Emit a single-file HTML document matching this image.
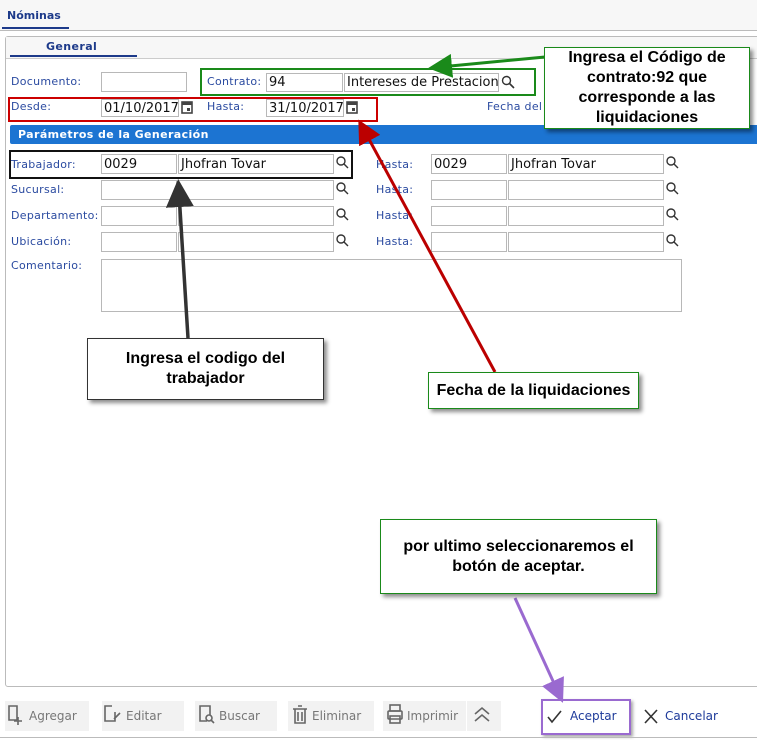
<!DOCTYPE html>
<html><head><meta charset="utf-8"><style>
body{margin:0;width:757px;height:740px;background:#fff;position:relative;overflow:hidden;font-family:"DejaVu Sans","Liberation Sans",sans-serif;}
.a{position:absolute}
.lbl{position:absolute;font-size:11px;color:#2a4aa0;letter-spacing:.3px}
.in{position:absolute;height:17px;border:1px solid #b8b8b8;background:#fff;box-sizing:border-box;font-size:12px;color:#111;padding:0 2px;white-space:nowrap;overflow:hidden;display:flex;align-items:center}
.call{position:absolute;background:#fff;font-family:"Liberation Sans",Arial,sans-serif;font-weight:bold;font-size:16px;text-align:center;box-shadow:3px 3px 4px rgba(0,0,0,.45);box-sizing:border-box;display:flex;align-items:center;justify-content:center;line-height:20px}
.btn{position:absolute;top:701px;height:30px;background:#f2f2f2;font-size:12px;color:#777;line-height:30px;box-sizing:border-box;padding-left:24px}
</style></head><body>
<div class="a" style="left:0;top:0;width:757px;height:30px;background:#f7f7f7"></div>
<div class="a" style="left:7px;top:9px;font-size:11px;font-weight:bold;color:#1d3a8a">Nóminas</div>
<div class="a" style="left:2px;top:27px;width:67px;height:2px;background:#1d3a8a"></div>
<div class="a" style="left:0;top:30px;width:757px;height:1px;background:#bbb"></div>
<div class="a" style="left:5px;top:36px;width:760px;height:651px;border:1px solid #bbb;box-sizing:border-box;border-radius:3px"></div>
<div class="a" style="left:6px;top:37px;width:751px;height:21px;background:#f7f7f7"></div>
<div class="a" style="left:46px;top:40px;font-size:11px;font-weight:bold;color:#1d3a8a;letter-spacing:.4px">General</div>
<div class="a" style="left:10px;top:55px;width:127px;height:2px;background:#1d3a8a"></div>
<div class="a" style="left:6px;top:58px;width:751px;height:1px;background:#ccc"></div>

<div class="lbl" style="left:11px;top:75px">Documento:</div>
<div class="in" style="left:101px;top:72px;width:86px;height:20px"></div>
<div class="a" style="left:200px;top:68px;width:336px;height:28px;border:2px solid #1a8a1a;box-sizing:border-box"></div>
<div class="lbl" style="left:207px;top:75px">Contrato:</div>
<div class="in" style="left:266px;top:73px;width:77px;height:19px;font-size:13px">94</div>
<div class="in" style="left:344px;top:73px;width:155px;height:19px;font-size:13px">Intereses de Prestacion</div>
<svg class="a" style="left:501px;top:75px" width="14" height="14"><circle cx="5.5" cy="5.5" r="4" fill="none" stroke="#333" stroke-width="1.4"/><line x1="8.5" y1="8.5" x2="13" y2="13" stroke="#333" stroke-width="1.6"/></svg>

<div class="a" style="left:8px;top:97px;width:370px;height:25px;border:2px solid #c00;box-sizing:border-box"></div>
<div class="lbl" style="left:11px;top:100px">Desde:</div>
<div class="in" style="left:101px;top:99px;width:78px;height:18px;font-size:13px">01/10/2017</div>
<div class="lbl" style="left:207px;top:100px">Hasta:</div>
<div class="in" style="left:266px;top:99px;width:78px;height:18px;font-size:13px">31/10/2017</div>
<svg class="a" style="left:181px;top:100px" width="12" height="14"><rect x="1" y="2" width="10" height="11" fill="none" stroke="#444" stroke-width="1.6"/><rect x="1" y="2" width="10" height="3" fill="#444"/><rect x="6" y="8" width="3" height="3" fill="#444"/></svg>
<svg class="a" style="left:346px;top:100px" width="12" height="14"><rect x="1" y="2" width="10" height="11" fill="none" stroke="#444" stroke-width="1.6"/><rect x="1" y="2" width="10" height="3" fill="#444"/><rect x="6" y="8" width="3" height="3" fill="#444"/></svg>
<div class="lbl" style="left:487px;top:100px">Fecha del</div>

<div class="a" style="left:10px;top:125px;width:747px;height:19px;background:#1c74d2;border-radius:2px 0 0 2px"></div>
<div class="a" style="left:18px;top:128px;font-size:11px;font-weight:bold;color:#fff;letter-spacing:.4px">Parámetros de la Generación</div>

<div class="a" style="left:9px;top:150px;width:344px;height:29px;border:2px solid #111;box-sizing:border-box"></div>
<div class="lbl" style="left:11px;top:158px">Trabajador:</div>
<div class="in" style="left:101px;top:154px;width:76px;height:20px;font-size:13px">0029</div>
<div class="in" style="left:178px;top:154px;width:156px;height:20px;font-size:13px">Jhofran Tovar</div>
<div class="lbl" style="left:376px;top:158px">Hasta:</div>
<div class="in" style="left:431px;top:154px;width:76px;height:20px;font-size:13px">0029</div>
<div class="in" style="left:508px;top:154px;width:156px;height:20px;font-size:13px">Jhofran Tovar</div>

<div class="lbl" style="left:11px;top:183px">Sucursal:</div>
<div class="lbl" style="left:11px;top:209px">Departamento:</div>
<div class="lbl" style="left:11px;top:235px">Ubicación:</div>
<div class="lbl" style="left:376px;top:183px">Hasta:</div>
<div class="lbl" style="left:376px;top:209px">Hasta:</div>
<div class="lbl" style="left:376px;top:235px">Hasta:</div>
<div class="in" style="left:101px;top:180px;width:76px;height:20px"></div><div class="in" style="left:178px;top:180px;width:156px;height:20px"></div>
<div class="in" style="left:101px;top:206px;width:76px;height:20px"></div><div class="in" style="left:178px;top:206px;width:156px;height:20px"></div>
<div class="in" style="left:101px;top:232px;width:76px;height:20px"></div><div class="in" style="left:178px;top:232px;width:156px;height:20px"></div>
<div class="in" style="left:431px;top:180px;width:76px;height:20px"></div><div class="in" style="left:508px;top:180px;width:156px;height:20px"></div>
<div class="in" style="left:431px;top:206px;width:76px;height:20px"></div><div class="in" style="left:508px;top:206px;width:156px;height:20px"></div>
<div class="in" style="left:431px;top:232px;width:76px;height:20px"></div><div class="in" style="left:508px;top:232px;width:156px;height:20px"></div>
<svg class="a" style="left:0;top:0" width="757" height="740">
<g fill="none" stroke="#333" stroke-width="1.4">
<circle cx="341" cy="161" r="4"/><line x1="344" y1="164" x2="348" y2="168"/>
<circle cx="671" cy="161" r="4"/><line x1="674" y1="164" x2="678" y2="168"/>
<circle cx="341" cy="187" r="4"/><line x1="344" y1="190" x2="348" y2="194"/>
<circle cx="671" cy="187" r="4"/><line x1="674" y1="190" x2="678" y2="194"/>
<circle cx="341" cy="213" r="4"/><line x1="344" y1="216" x2="348" y2="220"/>
<circle cx="671" cy="213" r="4"/><line x1="674" y1="216" x2="678" y2="220"/>
<circle cx="341" cy="239" r="4"/><line x1="344" y1="242" x2="348" y2="246"/>
<circle cx="671" cy="239" r="4"/><line x1="674" y1="242" x2="678" y2="246"/>
</g></svg>
<div class="lbl" style="left:11px;top:259px">Comentario:</div>
<div class="in" style="left:101px;top:259px;width:581px;height:53px"></div>

<svg class="a" style="left:0;top:0" width="757" height="740">
<defs>
<marker id="g" markerWidth="8" markerHeight="8" refX="4" refY="4" orient="auto"><path d="M0,0L8,4L0,8z" fill="#1a8a1a"/></marker>
<marker id="k" markerWidth="8" markerHeight="8" refX="4" refY="4" orient="auto"><path d="M0,0L8,4L0,8z" fill="#333"/></marker>
<marker id="r" markerWidth="8" markerHeight="8" refX="4" refY="4" orient="auto"><path d="M0,0L8,4L0,8z" fill="#b00"/></marker>
<marker id="p" markerWidth="8" markerHeight="8" refX="4" refY="4" orient="auto"><path d="M0,0L8,4L0,8z" fill="#9a6ad0"/></marker>
</defs>
<line x1="545" y1="57" x2="440" y2="67" stroke="#1a8a1a" stroke-width="3" marker-end="url(#g)"/>
<line x1="188" y1="338" x2="179" y2="193" stroke="#333" stroke-width="3.5" marker-end="url(#k)"/>
<line x1="495" y1="372" x2="364" y2="130" stroke="#b00" stroke-width="3" marker-end="url(#r)"/>
<line x1="515" y1="598" x2="558" y2="692" stroke="#9a6ad0" stroke-width="3" marker-end="url(#p)"/>
</svg>

<div class="call" style="left:544px;top:47px;width:206px;height:82px;border:1px solid #1a8a1a">Ingresa el Código de<br>contrato:92 que<br>corresponde a las<br>liquidaciones</div>
<div class="call" style="left:87px;top:338px;width:237px;height:62px;border:1px solid #333">Ingresa el codigo del<br>trabajador</div>
<div class="call" style="left:428px;top:372px;width:211px;height:37px;border:1px solid #1a8a1a">Fecha de la liquidaciones</div>
<div class="call" style="left:380px;top:519px;width:277px;height:75px;border:1px solid #1a8a1a">por ultimo seleccionaremos el<br>botón de aceptar.</div>

<div class="btn" style="left:5px;width:84px">Agregar</div>
<div class="btn" style="left:102px;width:82px">Editar</div>
<div class="btn" style="left:195px;width:82px">Buscar</div>
<div class="btn" style="left:288px;width:86px">Eliminar</div>
<div class="btn" style="left:383px;width:83px">Imprimir</div>
<div class="btn" style="left:467px;width:34px;padding:0"></div>
<svg class="a" style="left:0;top:700px" width="757" height="34">
<g fill="none" stroke="#666" stroke-width="1.6">
<path d="M17,20V6H9V20H17"/><path d="M18,17v8M14,21h8"/>
<path d="M112,6h-7v15h10V12"/><path d="M114,19l6-6"/>
<path d="M207,21h-7V6h10v9"/><circle cx="209" cy="18" r="3"/><path d="M211,20l3,3"/>
<path d="M293,9h14M298,6h4M295,9v14h10V9M298,12v9M302,12v9"/>
<rect x="388" y="11" width="14" height="8" rx="1"/><rect x="390" y="5" width="10" height="6"/><rect x="390" y="16" width="10" height="7"/>
<path d="M475,14l7-6l7,6M475,21l7-6l7,6"/>
</g>
<path d="M548,17l4,5l9-11" fill="none" stroke="#333" stroke-width="1.6"/>
<path d="M645,10l12,13M657,10l-12,13" fill="none" stroke="#333" stroke-width="1.6"/>
</svg>
<div class="a" style="left:570px;top:709px;font-size:12px;color:#1d3a9a">Aceptar</div>
<div class="a" style="left:665px;top:709px;font-size:12px;color:#1d3a9a">Cancelar</div>
<div class="a" style="left:541px;top:699px;width:90px;height:36px;border:2px solid #9a6ad0;box-sizing:border-box;box-shadow:2px 2px 3px rgba(0,0,0,.35)"></div>
<div class="a" style="left:0;top:737px;width:757px;height:1px;background:#bbb"></div>
</body></html>
